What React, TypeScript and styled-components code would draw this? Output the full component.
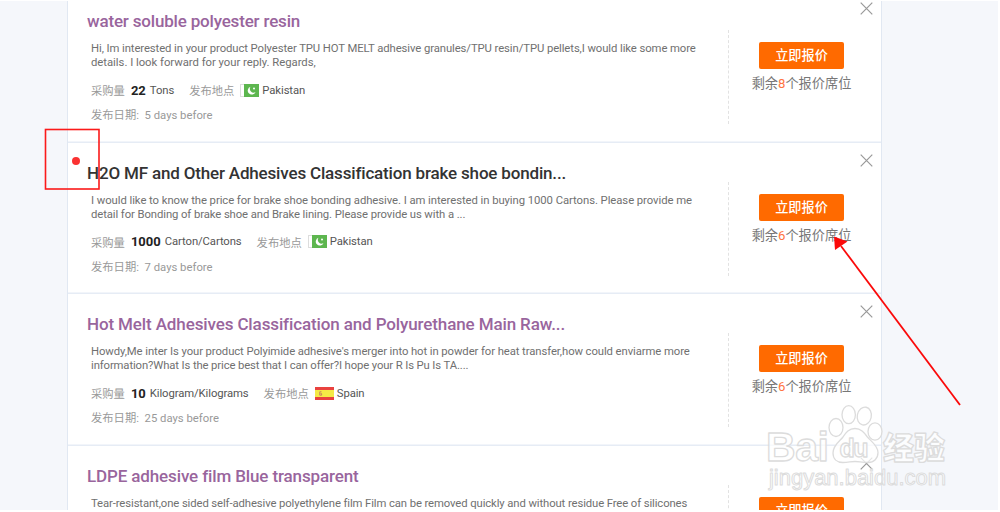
import React from 'react'
import styled, { createGlobalStyle } from 'styled-components'

const GlobalStyle = createGlobalStyle`
  * {
    box-sizing: border-box;
  }
  body {
    margin: 0;
    background: #fff;
    font-family: Roboto, 'Noto Sans CJK SC', sans-serif;
    overflow: hidden;
  }
`

const Page = styled.div`
  position: relative;
  width: 1000px;
  height: 512px;
  padding: 1px 2px 2px 0;
  overflow: hidden;
`
const Backdrop = styled.div`
  height: 509px;
  padding-left: 67px;
  background: #f5f7fb;
  overflow: hidden;
`
const List = styled.div`
  width: 815px;
  margin-top: -10px;
  border: 1px solid #e1e8f2;
  border-width: 0 1px;
  background: #fff;
`
const Card = styled.div`
  position: relative;
  display: flex;
  height: 151.5px;
  box-shadow: inset 0 -1.5px #e6ecf5;
`
const Main = styled.div`
  width: 660px;
  padding: 19px 0 0 19px;
`
const Title = styled.h2<{ $unread?: boolean; $spacing?: number }>`
  margin: 0;
  color: ${(p) => (p.$unread ? '#333' : '#99659d')};
  font-size: 17px;
  font-weight: 500;
  line-height: 22px;
  letter-spacing: ${(p) => p.$spacing || 0}px;
  white-space: nowrap;
`
const Body = styled.div`
  padding: 10px 0 0 4px;
  font-size: 11.3px;
`
const Line = styled.div<{ $spacing?: number }>`
  color: #707070;
  line-height: 14px;
  letter-spacing: ${(p) => p.$spacing || 0}px;
  white-space: nowrap;
`
const Meta = styled.div`
  display: flex;
  align-items: center;
  height: 18px;
  margin-top: 11px;
  color: #555;
  white-space: nowrap;
`
const Label = styled.span`
  color: #999;
`
const Amount = styled.b`
  margin: 0 4px 0 6px;
  color: #222;
  font-size: 13px;
`
const Unit = styled.span`
  letter-spacing: -0.1px;
`
const Place = styled(Label)`
  margin: 0 6px 0 15px;
`
const Country = styled.span`
  margin-left: 3px;
  letter-spacing: -0.1px;
`
const Posted = styled.div`
  margin-top: 8px;
  color: #999;
  line-height: 18px;
  white-space: pre;
`
const Side = styled.div`
  display: flex;
  flex-direction: column;
  align-items: center;
  width: 146px;
  height: 94px;
  margin-top: 39px;
  padding-top: 12px;
  border-left: 1px dashed #e2e2e2;
`
const QuoteButton = styled.button`
  width: 85px;
  height: 27px;
  padding: 0;
  border: 0;
  border-radius: 2px;
  background: #ff6a00;
  color: #fff;
  font-family: inherit;
  font-size: 13.2px;
  font-weight: 500;
  line-height: 27px;
`
const Slots = styled.div`
  margin-top: 5px;
  color: #777;
  font-size: 13.2px;
  line-height: 20px;
  span {
    color: #ff7340;
  }
`
const Close = styled.svg`
  position: absolute;
  top: 11px;
  right: 8.5px;
`
const Dot = styled.i`
  position: absolute;
  top: 14px;
  left: 4px;
  width: 8px;
  height: 8px;
  border-radius: 50%;
  background: #fa3232;
`
const Overlay = styled.svg`
  position: absolute;
  top: 0;
  left: 0;
`

const PakistanFlag = () => (
  <svg width="19" height="13" viewBox="0 0 19 13">
    <rect x=".5" y=".5" width="18" height="12" fill="#fff" stroke="#ddd" />
    <rect x="4" width="15" height="13" fill="#5db64f" />
    <path d="M10.500 2.800a4 4 0 1 0 5 5.200A3.700 3.700 0 0 1 10.500 2.800z" fill="#fff" />
    <circle cx="14" cy="4.500" r="1" fill="#fff" />
  </svg>
)
const SpainFlag = () => (
  <svg width="19" height="13" viewBox="0 0 20 13" preserveAspectRatio="none">
    <rect width="20" height="13" fill="#e9423f" />
    <rect y="3" width="20" height="7" fill="#f5ea45" />
    <path d="M6.800 4.800H5v3.400h2V6.600H5.800" fill="none" stroke="#c98362" />
  </svg>
)

type Request = {
  title: string
  titleSpacing?: number
  lines: [string, number][]
  amount: string
  unit: string
  country: string
  days: number
  slots: number
  unread?: boolean
}

const requests: Request[] = [
  {
    title: 'water soluble polyester resin',
    titleSpacing: -0.18,
    lines: [
      ['Hi, Im interested in your product Polyester TPU HOT MELT adhesive granules/TPU resin/TPU pellets,I would like some more', -0.087],
      ['details. I look forward for your reply. Regards,', -0.02],
    ],
    amount: '22',
    unit: 'Tons',
    country: 'Pakistan',
    days: 5,
    slots: 8,
  },
  {
    title: 'H2O MF and Other Adhesives Classification brake shoe bondin...',
    titleSpacing: -0.17,
    lines: [
      ['I would like to know the price for brake shoe bonding adhesive. I am interested in buying 1000 Cartons. Please provide me', -0.06],
      ['detail for Bonding of brake shoe and Brake lining. Please provide us with a ...', -0.09],
    ],
    amount: '1000',
    unit: 'Carton/Cartons',
    country: 'Pakistan',
    days: 7,
    slots: 6,
    unread: true,
  },
  {
    title: 'Hot Melt Adhesives Classification and Polyurethane Main Raw...',
    titleSpacing: -0.12,
    lines: [
      ["Howdy,Me inter Is your product Polyimide adhesive's merger into hot in powder for heat transfer,how could enviarme more", -0.085],
      ['information?What Is the price best that I can offer?I hope your R Is Pu Is TA....', -0.12],
    ],
    amount: '10',
    unit: 'Kilogram/Kilograms',
    country: 'Spain',
    days: 25,
    slots: 6,
  },
  {
    title: 'LDPE adhesive film Blue transparent',
    titleSpacing: -0.13,
    lines: [['Tear-resistant,one sided self-adhesive polyethylene film Film can be removed quickly and without residue Free of silicones', -0.105]],
    amount: '5',
    unit: 'Tons',
    country: 'Spain',
    days: 25,
    slots: 6,
  },
]

const RequestCard = ({ item, last }: { item: Request; last: boolean }) => (
  <Card>
    {item.unread && <Dot />}
    <Main>
      <Title $unread={item.unread} $spacing={item.titleSpacing}>
        {item.title}
      </Title>
      <Body>
        {item.lines.map(([text, spacing]) => (
          <Line key={text} $spacing={spacing}>
            {text}
          </Line>
        ))}
        {!last && (
          <>
            <Meta>
              <Label>采购量</Label>
              <Amount>{item.amount}</Amount>
              <Unit>{item.unit}</Unit>
              <Place>发布地点</Place>
              {item.country === 'Spain' ? <SpainFlag /> : <PakistanFlag />}
              <Country>{item.country}</Country>
            </Meta>
            <Posted>
              发布日期:{'  '}
              {item.days} days before
            </Posted>
          </>
        )}
      </Body>
    </Main>
    <Side>
      <QuoteButton>立即报价</QuoteButton>
      {!last && (
        <Slots>
          剩余<span>{item.slots}</span>个报价席位
        </Slots>
      )}
    </Side>
    <Close width="13" height="13" viewBox="0 0 13 13" stroke="#999" strokeWidth="1.200">
      <path d="M.7.7l11.600 11.600M12.300.7L.7 12.300" />
    </Close>
  </Card>
)

const Watermark = () => (
  <g
    fill="#fff"
    fillOpacity=".75"
    stroke="#dcdcdc"
    strokeWidth="1.300"
    strokeLinejoin="round"
    fontFamily="'Liberation Sans', 'Noto Sans CJK SC', sans-serif"
  >
    <text x="766" y="461" fontSize="41" fontWeight="700" textLength="63">
      Bai
    </text>
    <ellipse cx="836" cy="427.500" rx="7" ry="9" />
    <ellipse cx="848.700" cy="414.700" rx="6.700" ry="9" />
    <ellipse cx="864.300" cy="416" rx="7" ry="9" transform="rotate(12 864 416)" />
    <ellipse cx="875" cy="431.500" rx="7" ry="8.700" />
    <path d="M855 428.500c-6 0-9 4-12 8.500c-3 4-10 8-10 16c0 6 4 9.500 10 9.500c5 0 8-1 12-1s7 1 13 1c6 0 10-4 10-10c0-7-7-11-11-16c-3-4-6-8-12-8z" />
    <text x="839.500" y="457" fontSize="25" fontWeight="700" textLength="29">
      du
    </text>
    <text x="883" y="459" fontSize="31" fontWeight="900">
      经验
    </text>
    <text x="769" y="485" fontSize="22" textLength="177" strokeWidth="1">
      jingyan.baidu.com
    </text>
  </g>
)

const App = () => (
  <Page>
    <GlobalStyle />
    <Backdrop>
      <List>
        {requests.map((item, i) => (
          <RequestCard key={item.title} item={item} last={i === requests.length - 1} />
        ))}
      </List>
    </Backdrop>
    <Overlay width="1000" height="512">
      <Watermark />
      <rect x="45.500" y="129.500" width="53.500" height="59.500" fill="none" stroke="#fb1a1a" strokeWidth="1.600" />
      <path d="M960 405L841 246" stroke="#fb0a0a" strokeWidth="1.800" />
      <path d="M834 236.500l13.500 5L835 250z" fill="#fb0a0a" />
    </Overlay>
  </Page>
)

export default App
